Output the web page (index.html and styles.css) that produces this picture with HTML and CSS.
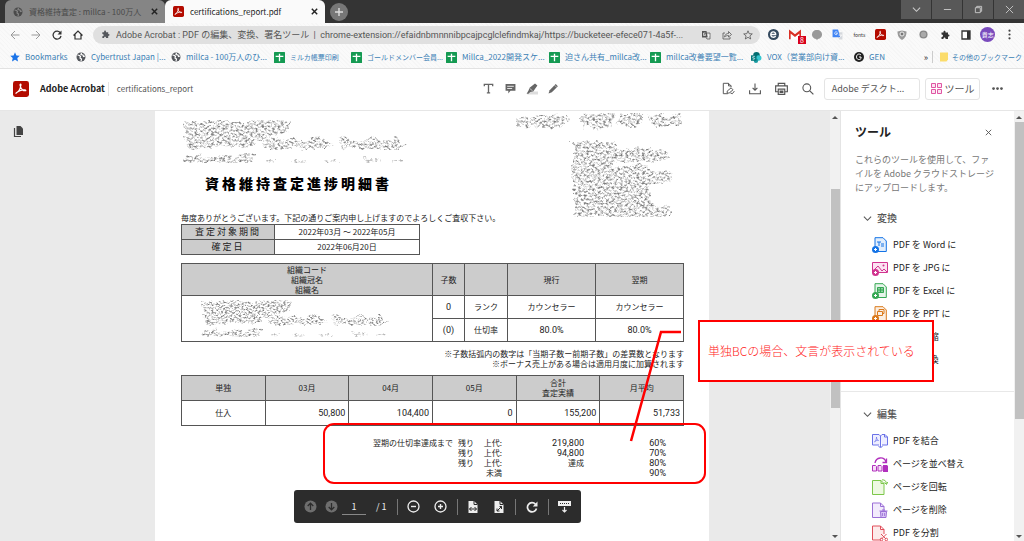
FILE: index.html
```html
<!DOCTYPE html>
<html lang="ja">
<head>
<meta charset="utf-8">
<title>certifications_report.pdf</title>
<link rel="stylesheet" href="styles.css">
</head>
<body>
<svg class="defs" aria-hidden="true">
  <symbol id="globe" viewBox="0 0 20 20"><circle cx="10" cy="10" r="9" fill="currentColor"/><path d="M3 6l4 1 2 2-1 3 3 2-1 4M11 2l-1 3 4 1 1 3 3-1" fill="none" stroke="var(--cut,#fff)" stroke-width="2.4"/></symbol>
  <symbol id="pdf" viewBox="0 0 20 20"><rect width="20" height="20" rx="3" fill="#b30b00"/><path d="M4 15c2-1 5-5 6-10 0-2-2-1-1 1 1 4 4 7 7 6 0-2-6-1-11 2-2 1-1 2-1 1z" fill="none" stroke="#fff" stroke-width="1.5"/></symbol>
  <symbol id="sheet" viewBox="0 0 20 20"><rect width="20" height="20" rx="1" fill="#149a52"/><path d="M10 3v14M3 8h14" stroke="#fff" stroke-width="2.4"/></symbol>
  <symbol id="puzzle" viewBox="0 0 20 20"><path d="M3 5h4c-1-5 5-5 4 0h5v4c4-1 4 5 0 4v5h-5c1-4-5-4-4 0H3v-4c4 0 4-5 0-5z" fill="currentColor"/></symbol>
  <symbol id="close" viewBox="0 0 10 10"><path d="M2 2l6 6M8 2l-6 6" stroke="currentColor" stroke-width="1.6"/></symbol>
  <symbol id="chev" viewBox="0 0 10 10"><path d="M1 3l4 4 4-4" fill="none" stroke="currentColor" stroke-width="1.2"/></symbol>
  <symbol id="trans" viewBox="0 0 20 20"><path d="M2 2h9l3 13H2z" fill="currentColor"/><path d="M12 6h6v12h-6l-2-3" fill="none" stroke="currentColor" stroke-width="1.5"/><path d="M9 6H5v5h4V9H7M12 10h5M16 10c-1 3-2 4-4 5" fill="none" stroke="#fff" stroke-width="1.3"/></symbol>
  <filter id="speckle" x="0" y="0" width="100%" height="100%">
    <feTurbulence type="fractalNoise" baseFrequency="0.36 0.5" numOctaves="3" seed="7" result="n"/>
    <feColorMatrix in="n" values="0 0 0 0 .2  0 0 0 0 .2  0 0 0 0 .2  3 0 0 0 -1.3" result="dots"/>
    <feTurbulence type="fractalNoise" baseFrequency="0.12" numOctaves="2" seed="3" result="w"/>
    <feDisplacementMap in="SourceGraphic" in2="w" scale="10" xChannelSelector="R" yChannelSelector="G" result="shape"/>
    <feComposite in="dots" in2="shape" operator="in"/>
  </filter>
  <symbol id="smudge" viewBox="0 0 232 48"><g filter="url(#speckle)">
    <path d="M2 2h72l36 2v10l-30 6-40 4H10z"/>
    <path d="M4 18h42l12 2 14-1 3 8-25 2-45 2zM80 22l10-3 12 5 8-4 14 3 16-3 12 8-6 3-60 0zM156 22l10-3 12 5 8-4 14 3 16-3 10 8-6 3-55 0z"/>
    <path d="M2 44l4-7h14l2 4 6-4h22l2 4 6-4h16v8H2z"/><path d="M84 42h10v3H84zM112 41h12v4h-12zM142 42h18v3h-18zM182 41h18v4h-18zM210 42h14v3h-14z" opacity=".6"/>
  </g></symbol>
  <symbol id="doc" viewBox="0 0 16 16"><path d="M3 .7h8l3.3 3.3v10.5H3z" fill="currentColor" fill-opacity=".12" stroke="currentColor" stroke-linejoin="round"/></symbol>
</svg>

<header class="browser">
  <div class="tabstrip">
    <div class="tab tab-idle"><svg class="i10 cutgray"><use href="#globe"/></svg><span class="tab-title">資格維持査定 : millca - 100万人</span><button class="bare" aria-label="閉じる"><svg class="i9"><use href="#close"/></svg></button></div>
    <div class="tab tab-active"><svg class="i11"><use href="#pdf"/></svg><span class="tab-title">certifications_report.pdf</span><button class="bare" aria-label="閉じる"><svg class="i9"><use href="#close"/></svg></button></div>
    <button class="newtab" aria-label="新しいタブ"><svg class="i10" viewBox="0 0 10 10"><path d="M5 1v8M1 5h8" stroke="#ddd" stroke-width="1.4"/></svg></button>
    <div class="winctl">
      <button aria-label="タブを検索"><svg class="i9"><use href="#chev"/></svg></button>
      <button aria-label="最小化"><svg class="i9" viewBox="0 0 10 10"><path d="M1 5h8" stroke="currentColor"/></svg></button>
      <button aria-label="元に戻す"><svg class="i9" viewBox="0 0 10 10"><path d="M1.500 3h5.500v5.500H1.500zM3 3V1.500h5.500V7H7" fill="none" stroke="currentColor"/></svg></button>
      <button aria-label="閉じる"><svg class="i9" viewBox="0 0 10 10"><path d="M1 1l8 8M9 1l-8 8" stroke="currentColor"/></svg></button>
    </div>
  </div>
  <div class="toolbar">
    <nav class="navbtns">
      <button class="bare faint" aria-label="戻る"><svg class="i10" viewBox="0 0 10 10"><path d="M9.500 5H1M5 1L1 5l4 4" fill="none" stroke="currentColor"/></svg></button>
      <button class="bare faint" aria-label="進む"><svg class="i10" viewBox="0 0 10 10"><path d="M.5 5H9M5 1l4 4-4 4" fill="none" stroke="currentColor"/></svg></button>
      <button class="bare" aria-label="再読み込み"><svg class="i10" viewBox="0 0 10 10"><path d="M8.500 3A4 4 0 1 0 9 6" fill="none" stroke="currentColor" stroke-width="1.3"/><path d="M9.500.5v4h-4z" fill="currentColor"/></svg></button>
      <button class="bare" aria-label="ホーム"><svg class="i10" viewBox="0 0 10 10"><path d="M.5 5.500L5 1l4.500 4.500M2 4.500V9h6V4.500" fill="none" stroke="currentColor" stroke-width="1.2"/></svg></button>
    </nav>
    <div class="omnibox">
      <svg class="i9 slate"><use href="#puzzle"/></svg>
      <span class="url">Adobe Acrobat : PDF の編集、変換、署名ツール  |  chrome-extension://efaidnbmnnnibpcajpcglclefindmkaj/https://bucketeer-efece071-4a5f-...</span>
      <button class="bare" aria-label="翻訳"><svg class="i10"><use href="#trans"/></svg></button>
      <button class="bare" aria-label="共有"><svg class="i10" viewBox="0 0 10 10"><path d="M3 3H1v6h7V7M2.500 7C3 4 5 3.500 6.500 3.500V1.500L9.500 4.500 6.500 7V5.500C5 5.500 3.500 6 2.500 7z" fill="none" stroke="currentColor" stroke-width=".8"/></svg></button>
      <button class="bare" aria-label="ブックマーク"><svg class="i10" viewBox="0 0 10 10"><path d="M5 .8l1.200 2.900 3.100.2-2.400 2 .8 3.100L5 7.300 2.300 9l.8-3.100-2.400-2 3.100-.2z" fill="none" stroke="currentColor" stroke-width=".8"/></svg></button>
    </div>
    <div class="exts">
      <button><svg class="i11" viewBox="0 0 20 20"><circle cx="10" cy="10" r="10" fill="#34495e"/><path d="M5 10h9c0-7-9-6-9 0 0 6 7 6 9 3" fill="none" stroke="#fff" stroke-width="2.400"/></svg></button>
      <button class="gmail"><svg class="i12" viewBox="0 0 20 20"><path d="M1 17V4l9 7 9-7v13" fill="#fff" stroke="#d93025" stroke-width="3.500"/></svg><span class="badge">8</span></button>
      <button><svg class="i10" viewBox="0 0 10 10"><path d="M5 0a4.500 4.500 0 0 1 1 9L5 10 4 9A4.500 4.500 0 0 1 5 0z" fill="#999"/></svg></button>
      <button><svg class="i11" viewBox="0 0 20 20"><path d="M8 6h11v13h-6z" fill="#d5d8dc"/><path d="M1 1h10l4 14H1z" fill="#4285f4"/><path d="M10 6C6 3 3 8 6 10c3 1 4-1 4-2H7M12 11h6M17 11c-1 3-2 4-4 5" fill="none" stroke="#fff" stroke-width="1.300"/></svg></button>
      <button class="fonts">fonts</button>
      <button><svg class="i11"><use href="#pdf"/></svg></button>
      <button><svg class="i10" viewBox="0 0 10 10"><path d="M.5 1.500L5 .5l4.500 1C9.500 6 8 8 5 10 2 8 .5 6 .5 1.500z" fill="#999"/><circle cx="5" cy="4" r="2" fill="#777" stroke="#eee"/></svg></button>
      <button><svg class="i9" viewBox="0 0 10 10"><circle cx="5" cy="5" r="4.500" fill="#888"/><circle cx="5" cy="5" r="3" fill="#aaa"/></svg></button>
      <button><svg class="i10 dark"><use href="#puzzle"/></svg></button>
      <button><svg class="i10" viewBox="0 0 10 10"><path d="M1 1h8v8H1z" fill="#fff" stroke="#333" stroke-width="1.300"/><path d="M6 1h3v8H6z" fill="#333"/></svg></button>
      <button class="avatar">貴志</button>
      <button><svg class="i11" viewBox="0 0 10 10" fill="#444"><circle cx="5" cy="1.500" r="1"/><circle cx="5" cy="5" r="1"/><circle cx="5" cy="8.500" r="1"/></svg></button>
    </div>
  </div>
  <nav class="bookmarks">
    <a href="#"><svg class="i10" viewBox="0 0 10 10"><path d="M5 .3l1.400 3.100 3.400.3-2.500 2.200.7 3.600L5 7.700 2 9.500l.7-3.600L.2 3.700l3.400-.3z" fill="#1a73e8"/></svg>Bookmarks</a>
    <a href="#"><svg class="i10 slate"><use href="#globe"/></svg>Cybertrust Japan |...</a>
    <a href="#"><svg class="i10 slate"><use href="#globe"/></svg>millca - 100万人のひ...</a>
    <a href="#" class="jp"><svg class="i11"><use href="#sheet"/></svg>ミルカ帳票印刷</a>
    <a href="#" class="jp"><svg class="i11"><use href="#sheet"/></svg>ゴールドメンバー会員...</a>
    <a href="#"><svg class="i11"><use href="#sheet"/></svg>Millca_2022開発スケ...</a>
    <a href="#"><svg class="i11"><use href="#sheet"/></svg>迫さん共有_millca改...</a>
    <a href="#"><svg class="i11"><use href="#sheet"/></svg>millca改善要望一覧...</a>
    <a href="#"><svg class="i11" viewBox="0 0 20 20"><circle cx="10" cy="6" r="6" fill="#036c70"/><circle cx="14" cy="11" r="5" fill="#37c6d0"/><circle cx="9" cy="16" r="4" fill="#1a9ba1"/><path d="M0 6h10v10H0z" fill="#03787c"/><path d="M7 8c-5-1-5 3-2 3s2 3-2 2" fill="none" stroke="#fff" stroke-width="1.300"/></svg>VOX（営業部向け資...</a>
    <a href="#"><svg class="i10" viewBox="0 0 20 20"><circle cx="10" cy="10" r="10" fill="#222"/><path d="M14 6c-4-4-9-1-9 4s6 7 9 3v-3h-4" fill="none" stroke="#fff" stroke-width="2"/></svg>GEN</a>
    <button class="bare more" aria-label="その他">»</button>
    <a href="#" class="jp other"><svg class="i10" viewBox="0 0 10 10"><path d="M1 .5h8v7L7.500 9.500H1z" fill="#fbdc6b"/></svg>その他のブックマーク</a>
  </nav>
</header>

<header class="acrobat">
  <div class="brand"><svg class="i16"><use href="#pdf"/></svg><strong>Adobe Acrobat</strong><span class="fname">certifications_report</span></div>
  <div class="annot">
    <button class="bare" aria-label="テキスト"><svg class="i11" viewBox="0 0 10 10"><path d="M1.200 3V1.200h7.600V3M5 1.200v7.600M3.500 8.900h3" fill="none" stroke="currentColor" stroke-width="1.200"/></svg></button>
    <button class="bare" aria-label="コメント"><svg class="i11" viewBox="0 0 20 20"><path d="M1 2h18v12h-9l-4 5v-5H1z" fill="currentColor"/><path d="M4 6h12M4 10h9" stroke="#fff" stroke-width="1.500"/></svg></button>
    <button class="bare" aria-label="ハイライト"><svg class="i12" viewBox="0 0 20 20"><path d="M6 14h14v5H2z" fill="#ddd"/><path d="M15 1l4 3-7 10-5 1-3 3H1l3-5 2-5z" fill="currentColor"/><path d="M6 9l5 4" stroke="#fff"/></svg></button>
    <button class="bare" aria-label="描画"><svg class="i11" viewBox="0 0 20 20"><path d="M1 19l2-6L14 2l4 4L7 17z" fill="currentColor"/><path d="M12 4l4 4" stroke="#fff"/></svg></button>
  </div>
  <div class="actions">
    <button class="bare" aria-label="署名"><svg class="i13" viewBox="0 0 20 20"><path d="M9 18H2V2h8l4 4v2M10 2v4h4M8 14l6-5 3 3-6 5H8zM13 17l3 1 3-4" fill="none" stroke="currentColor" stroke-width="1.500"/></svg></button>
    <button class="bare" aria-label="ダウンロード"><svg class="i12" viewBox="0 0 20 20"><path d="M10 1v11M6 8l4 4 4-4M1 12v6h18v-6" fill="none" stroke="currentColor" stroke-width="1.800"/></svg></button>
    <button class="bare" aria-label="印刷"><svg class="i13" viewBox="0 0 20 20"><path d="M5 6V2h10v4M5 15H1V6h18v9h-4M5 11h10v8H5zM7 14h6M7 16h6" fill="none" stroke="currentColor" stroke-width="1.800"/></svg></button>
    <button class="bare" aria-label="検索"><svg class="i12" viewBox="0 0 20 20"><circle cx="8" cy="8" r="6.500" fill="none" stroke="currentColor" stroke-width="1.800"/><path d="M13 13l6 6" stroke="currentColor" stroke-width="2"/></svg></button>
    <button class="boxed open">Adobe デスクト...</button>
    <button class="boxed tools"><svg class="i11" viewBox="0 0 11 11"><path d="M.5.5h4v4h-4zM6.500.5h4v4h-4zM.5 6.500h4v4h-4zM6.500 6.500h4v4h-4z" fill="#fbe3f1" stroke="#e055a3"/></svg>ツール</button>
    <button class="bare" aria-label="その他"><svg class="i11" viewBox="0 0 12 12" fill="currentColor"><circle cx="1.700" cy="6" r="1.500"/><circle cx="6" cy="6" r="1.500"/><circle cx="10.300" cy="6" r="1.500"/></svg></button>
  </div>
</header>

<main class="work">
  <aside class="rail"><button class="bare" aria-label="ページサムネイル"><svg class="i11" viewBox="0 0 11 11"><path d="M3.500 0h4L10 2.500V9H3.500z" fill="#444"/><path d="M1.500 2v8.500H8" fill="none" stroke="#444" stroke-width="1.200"/></svg></button></aside>

  <section class="viewer">
    <article class="page">
      <div class="dochead">
        <div>
          <svg class="smudge"><use href="#smudge"/></svg>
          <h1>資格維持査定進捗明細書</h1>
        </div>
        <svg class="stamp" viewBox="0 0 172 106"><g filter="url(#speckle)">
          <path d="M4 8l12-3 42-2v8l-10 6-42-1zM68 4l34-2-2 14-20 2-12-6zM108 3h24l-8 14-18-4zM134 5l36-2-2 10-24 4z"/>
          <path d="M60 30h40l6 8 42-2 10 8-10 6-40 2h-8v18l-40 4v-24z"/>
          <path d="M60 30h40l-4 22-36 4z" opacity=".6"/>
          <path d="M98 56l34-2 6 6 20 2 2 8-22 2v20l20 4v10l-50 4-22-6-24 4-2-30 8-16h34z"/>
          <path d="M60 88h22v16H60z"/><path d="M98 58h36v10H98zM88 72h46v16H88z"/>
        </g></svg>
      </div>
      <p class="intro">毎度ありがとうございます。下記の通りご案内申し上げますのでよろしくご査収下さい。</p>

      <table class="grid period">
        <tr><th>査定対象期間</th><td>2022年03月 ～ 2022年05月</td></tr>
        <tr><th>確定日</th><td>2022年06月20日</td></tr>
      </table>

      <table class="grid org">
        <colgroup><col class="c50"><col class="c6"><col class="c9"><col class="c17"><col></colgroup>
        <tr class="tall"><th>組織コード<br>組織冠名<br>組織名</th><th>子数</th><th></th><th>現行</th><th>翌期</th></tr>
        <tr><td rowspan="2"><svg class="smudge small"><use href="#smudge"/></svg></td><td class="dig">0</td><td>ランク</td><td>カウンセラー</td><td>カウンセラー</td></tr>
        <tr><td class="dig">(0)</td><td>仕切率</td><td class="dig">80.0%</td><td class="dig">80.0%</td></tr>
      </table>
      <p class="notes">※子数括弧内の数字は「当期子数ー前期子数」の差異数となります<br>※ボーナス売上がある場合は適用月度に加算されます</p>

      <table class="grid sales">
        <tr><th>単独</th><th>03月</th><th>04月</th><th>05月</th><th>合計<br>査定実績</th><th>月平均</th></tr>
        <tr><td>仕入</td><td class="num">50,800</td><td class="num">104,400</td><td class="num">0</td><td class="num">155,200</td><td class="num">51,733</td></tr>
      </table>

      <table class="remain">
        <colgroup><col class="r1"><col class="r2"><col class="r3"><col class="r4"><col class="r4"><col></colgroup>
        <tr><td>翌期の仕切率達成まで</td><td>残り</td><td>上代:</td><td class="fig">219,800</td><td class="fig">60%</td><td></td></tr>
        <tr><td></td><td>残り</td><td>上代:</td><td class="fig">94,800</td><td class="fig">70%</td><td></td></tr>
        <tr><td></td><td>残り</td><td>上代:</td><td>達成</td><td class="fig">80%</td><td></td></tr>
        <tr><td></td><td></td><td>未満</td><td></td><td class="fig">90%</td><td></td></tr>
      </table>

      <div class="mark"></div>
      <svg class="leader" viewBox="0 0 60 120"><path d="M53 9H33L3 118" fill="none" stroke="#f00" stroke-width="2.500"/></svg>
      <div class="callout">単独BCの場合、文言が表示されている</div>

      <div class="pager">
        <button class="bare" aria-label="前のページ"><svg class="i13" viewBox="0 0 13 13"><circle cx="6.500" cy="6.500" r="6" fill="#6e6e6e"/><path d="M6.500 10V3.500M3.700 6l2.800-2.800L9.300 6" fill="none" stroke="#2c2c2c" stroke-width="1.300"/></svg></button>
        <button class="bare next" aria-label="次のページ"><svg class="i13" viewBox="0 0 13 13"><circle cx="6.500" cy="6.500" r="6" fill="#6e6e6e"/><path d="M6.500 3v6.500M3.700 7l2.800 2.800L9.300 7" fill="none" stroke="#2c2c2c" stroke-width="1.300"/></svg></button>
        <input type="text" value="1" aria-label="ページ番号"><span class="total">/ 1</span>
        <i></i>
        <button class="bare" aria-label="縮小"><svg class="i13" viewBox="0 0 13 13"><circle cx="6.500" cy="6.500" r="5.500" fill="none" stroke="#eee" stroke-width="1.300"/><path d="M4 6.500h5" stroke="#eee" stroke-width="1.400"/></svg></button>
        <button class="bare second" aria-label="拡大"><svg class="i13" viewBox="0 0 13 13"><circle cx="6.500" cy="6.500" r="5.500" fill="none" stroke="#eee" stroke-width="1.300"/><path d="M4 6.500h5M6.500 4v5" stroke="#eee" stroke-width="1.400"/></svg></button>
        <i></i>
        <button class="bare" aria-label="幅に合わせる"><svg class="i12" viewBox="0 0 12 12"><path d="M1.500 0H7l3.500 3.500V12h-9z" fill="#eee"/><path d="M7 0v3.500h3.500M2.500 8h7M4.500 6l-2 2 2 2M7.500 6l2 2-2 2" fill="none" stroke="#2c2c2c"/></svg></button>
        <button class="bare second" aria-label="全体表示"><svg class="i12" viewBox="0 0 12 12"><path d="M1.500 0H7l3.500 3.500V12h-9z" fill="#eee"/><path d="M7 0v3.500h3.500M4 10l4.500-4.500M4 7.500V10h2.500M6.500 5.500h2V8" fill="none" stroke="#2c2c2c"/></svg></button>
        <i></i>
        <button class="bare" aria-label="回転"><svg class="i12" viewBox="0 0 12 12"><path d="M9.500 3.200A4.600 4.600 0 1 0 10.500 7.500" fill="none" stroke="#eee" stroke-width="1.700"/><path d="M11.500.5v5H6.800z" fill="#eee"/></svg></button>
        <i></i>
        <button class="bare" aria-label="ツールバーを固定"><svg class="i13" viewBox="0 0 13 13"><path d="M0 1h13v5H0z" fill="#eee"/><path d="M2 3.500h9" stroke="#2c2c2c" stroke-dasharray="1 1"/><path d="M6.500 7v5M4.500 10l2 2 2-2" fill="none" stroke="#eee" stroke-width="1.200"/></svg></button>
      </div>
    </article>
  </section>
  <div class="scroll main-scroll"><b class="up"></b><div class="thumb"></div><b class="down"></b></div>

  <aside class="panel">
    <div class="panel-head"><h2>ツール</h2><button class="bare" aria-label="閉じる"><svg class="i9" viewBox="0 0 10 10"><path d="M2 2l6 6M8 2l-6 6" stroke="#555"/></svg></button></div>
    <p>これらのツールを使用して、ファ<br>イルを Adobe クラウドストレージ<br>にアップロードします。</p>
    <section>
      <h3><svg class="i9"><use href="#chev"/></svg>変換</h3>
      <ul>
        <li class="blue"><svg class="i16" viewBox="0 0 16 16"><use href="#doc"/><path d="M5 5h4M7 5v4M9 7h3M9 9h3" stroke="currentColor"/><circle cx="3.500" cy="12.500" r="3.500" fill="currentColor"/><path d="M2 12.500h3M3.500 11v3" stroke="#fff"/></svg>PDF を Word に</li>
        <li class="pink"><svg class="i16" viewBox="0 0 16 16"><path d="M.5 2.500h15v10H.5z" fill="#fbe3f1" stroke="currentColor"/><path d="M2 10l4-4 4 5 2-2 3 3" fill="none" stroke="currentColor"/><circle cx="11.500" cy="5.500" r="1" fill="currentColor"/><circle cx="3.500" cy="12.500" r="3.500" fill="currentColor"/><path d="M2 12.500h3M3.500 11v3" stroke="#fff"/></svg>PDF を JPG に</li>
        <li class="green"><svg class="i16" viewBox="0 0 16 16"><use href="#doc"/><path d="M5.500 4.500h6v5h-6zM5.500 7h6M8.500 4.500v5" fill="#35a853" fill-opacity=".5" stroke="currentColor"/><circle cx="3.500" cy="12.500" r="3.500" fill="currentColor"/><path d="M2 12.500h3M3.500 11v3" stroke="#fff"/></svg>PDF を Excel に</li>
        <li class="orange"><svg class="i16" viewBox="0 0 16 16"><use href="#doc"/><path d="M5.500 5.500h5v4h-5zM7 5.500v-2h5v4h-1.500" fill="none" stroke="currentColor"/><circle cx="3.500" cy="12.500" r="3.500" fill="currentColor"/><path d="M2 12.500h3M3.500 11v3" stroke="#fff"/></svg>PDF を PPT に</li>
        <li class="pink"><svg class="i16" viewBox="0 0 16 16"><use href="#doc"/></svg>PDF を圧縮</li>
        <li class="blue"><svg class="i16" viewBox="0 0 16 16"><use href="#doc"/></svg>PDF に変換</li>
      </ul>
    </section>
    <section class="edit">
      <h3><svg class="i9"><use href="#chev"/></svg>編集</h3>
      <ul>
        <li class="indigo"><svg class="i16" viewBox="0 0 16 16"><path d="M7 12H.5V1.500H7l1.500 1.500V14M8.500 3L10 1.500h3l2.500 2.500V12H10M12.500 1.500V4h3M6.500 13l2 2 2-2" fill="#eef" stroke="currentColor"/><path d="M2.500 9c2-2 2-4 2-5 0 2 1 3 2 3.500-2-.5-3 .5-4 1.500z" fill="none" stroke="currentColor" stroke-width=".7"/></svg>PDF を結合</li>
        <li class="purple"><svg class="i16" viewBox="0 0 16 16"><path d="M.5 9.500h3l1 1V15h-4zM6 9.500h3l1 1V15H6z" fill="#f6def6" stroke="currentColor"/><path d="M11 9h4l1 1v6h-5z" fill="currentColor"/><path d="M3 7c1-6 9-7 11-1M14.500 2.500V6.500h-4" fill="none" stroke="currentColor" stroke-width="1.300"/></svg>ページを並べ替え</li>
        <li class="lime"><svg class="i16" viewBox="0 0 16 16"><path d="M.5 1.500H9l3 3v11H.5z" fill="#eef9e2" stroke="currentColor"/><path d="M9 1.500v3h3M10 .8c3 0 4 1 4.500 4M12.500 3.500l2 2 1.300-2.500" fill="none" stroke="currentColor"/></svg>ページを回転</li>
        <li class="violet"><svg class="i16" viewBox="0 0 16 16"><path d="M.5 1h8L12 4.500v11H.5z" fill="#f2ebfc" stroke="currentColor"/><path d="M8.500 1v3.500H12M7.500 9h8M10 8h3" fill="none" stroke="currentColor"/><path d="M8.500 9.500h6l-.5 6H9z" fill="#d9c6f5" stroke="currentColor"/><path d="M10.500 11v3M12.500 11v3" stroke="currentColor" stroke-width=".8"/></svg>ページを削除</li>
        <li class="red"><svg class="i16" viewBox="0 0 16 16"><path d="M9 15H.5V1h8L12 4.500V9M8.500 1v3.500H12" fill="#fdeaea" stroke="currentColor"/><path d="M9 9l5 5M14.500 9l-5 5" stroke="currentColor"/><circle cx="9.500" cy="14.500" r="1.300" fill="none" stroke="currentColor"/><circle cx="14.300" cy="14.500" r="1.300" fill="none" stroke="currentColor"/></svg>PDF を分割</li>
      </ul>
    </section>
  </aside>
  <div class="scroll panel-scroll"><b class="up"></b><div class="thumb"></div><b class="down"></b></div>
</main>
</body>
</html>
```

FILE: styles.css
```css
* { box-sizing: border-box; }
body {
  margin: 0;
  height: 100vh;
  display: flex;
  flex-direction: column;
  overflow: hidden;
  font-family: "Noto Sans CJK JP", sans-serif;
  font-size: 8px;
  color: #333;
  background: #fff;
}
button, input { font: inherit; color: inherit; }
button { border: 0; padding: 0; background: none; display: flex; align-items: center; justify-content: center; }
svg { display: block; flex: none; }
h1, h2, h3, p, ul { margin: 0; padding: 0; }
.defs { position: absolute; width: 0; height: 0; }
.i9 { width: 9px; height: 9px; }
.i10 { width: 10px; height: 10px; }
.i11 { width: 11px; height: 11px; }
.i12 { width: 12px; height: 12px; }
.i13 { width: 13px; height: 13px; }
.i16 { width: 16px; height: 16px; }
.slate { color: #54575c; }
.dark { color: #333; }
.cutgray { --cut: #858585; }

/* browser frame */
.browser { flex: none; border-bottom: 1px solid #e2e2e2; }
.tabstrip { height: 23px; display: flex; align-items: center; background: #343434; padding-left: 5px; }
.tab { width: 160px; height: 23px; display: flex; align-items: center; gap: 6px; padding: 0 6px 0 8px; border-radius: 6px 6px 0 0; }
.tab-title { flex: 1; overflow: hidden; white-space: nowrap; line-height: 14px; }
.tab-idle { background: #858585; color: #4a4a4a; }
.tab-idle button { color: #222; }
.tab-active { background: #fafafa; color: #222; }
.newtab { width: 18px; height: 18px; margin-left: 5px; border-radius: 9px; background: #777; }
.winctl { margin-left: auto; align-self: flex-start; display: flex; gap: 1px; color: #ccc; }
.winctl button { width: 30px; height: 19px; background: #585858; }
.toolbar, .bookmarks { background: repeating-linear-gradient(45deg, #fafafa 0 2px, #f6f6f6 2px 3px); }
.toolbar { height: 23px; display: flex; align-items: center; padding-right: 4px; }
.navbtns { width: 93px; display: flex; gap: 11px; padding-left: 10px; color: #333; }
.faint { color: #999; }
.omnibox { flex: 1; min-width: 0; height: 18px; display: flex; align-items: center; gap: 11px; padding: 0 7px 0 8px; border-radius: 9px; background: #e0e0e0; color: #555; }
.url { flex: 1; min-width: 0; overflow: hidden; white-space: pre; margin: 0 -6px 0 -5px; font-family: Roboto, "Noto Sans CJK JP", sans-serif; font-size: 9px; line-height: 16px; }
.exts { width: 260px; display: grid; grid-template-columns: repeat(12, 1fr); align-items: center; padding-left: 3px; }
.gmail { position: relative; }
.badge { position: absolute; right: 0; bottom: -3px; width: 8px; height: 8px; background: #d8001b; color: #fff; font-size: 7px; line-height: 8px; text-align: center; }
.fonts { font-size: 5px; }
.avatar { width: 15px; height: 15px; margin: auto; border-radius: 8px; background: #7a4bbd; color: #fff; font-size: 6px; }
.bookmarks { height: 22px; display: grid; grid-template-columns: 66px 95px 103px 77px 95px 103px 101px 101px 103px 1fr 12px 92px; align-items: center; padding: 0 0 0 10px; }
.bookmarks a { display: flex; align-items: center; gap: 5px; color: #3b7fb5; text-decoration: none; white-space: nowrap; line-height: 12px; }
.bookmarks .jp { font-size: 7px; }
.bookmarks .other { gap: 3px; padding-left: 6px; border-left: 1px solid #ccc; }
.more { font-size: 9px; }

/* viewer header */
.acrobat { flex: none; height: 42px; display: grid; grid-template-columns: 1.06fr 76px 1fr; align-items: center; border-bottom: 1px solid #e6e6e6; padding: 0 21px 2px 13px; color: #555; }
.brand { display: flex; align-items: center; gap: 11px; font-size: 9px; color: #222; }
.fname { border-left: 1px solid #e4e4e4; padding-left: 8px; margin-left: -8px; color: #555; line-height: 14px; font-size: 8px; }
.annot { display: flex; justify-content: space-between; color: #666; }
.actions { display: flex; align-items: center; justify-content: flex-end; gap: 14px; }
.boxed { height: 22px; border: 1px solid #e4e4e4; border-radius: 3px; background: #fff; white-space: nowrap; font-size: 10px; }
.open { width: 96px; padding-right: 8px; margin-left: -4px; font-size: 9px; }
.tools { width: 55px; gap: 3px; margin-left: -9px; margin-right: -2px; }

/* work area */
.work { flex: 1; min-height: 0; display: flex; background: #eaeaea; }
.rail { flex: none; width: 34px; padding: 15px 0 0 13px; }
.viewer { flex: 1; min-width: 0; display: flex; justify-content: center; }
.page { position: relative; flex: none; width: 554px; padding: 0 25px 0 26px; background: #fff; color: #222; font-size: 8px; line-height: 10px; }
.dochead { height: 102px; display: flex; justify-content: space-between; }
.smudge { width: 232px; height: 48px; margin: 7px 0; }
.small { width: 194px; height: 44px; margin: 0 0 0 18px; }
h1 { font-size: 14px; line-height: 20px; letter-spacing: 3px; padding-left: 24px; font-weight: 900; color: #000; }
.stamp { width: 172px; height: 106px; }
.intro { white-space: nowrap; }
.grid { width: 100%; table-layout: fixed; border-collapse: collapse; }
.grid th, .grid td { border: 1px solid #555; padding: 0; font-weight: 400; text-align: center; }
.grid th { background: #ccc; }
.period { width: 239px; margin-top: 1px; }
.period tr { height: 15px; }
.period th { width: 93px; font-size: 9px; letter-spacing: 2px; }
.period td { line-height: 14px; }
.org { margin-top: 8px; }
.org tr { height: 23px; }
.org .tall { height: 32px; }
.c50 { width: 251px; }
.c6 { width: 32px; }
.c9 { width: 43px; }
.c17 { width: 88px; }
.notes { padding-top: 7px; text-align: right; }
.sales { margin-top: 6px; }
.sales tr { height: 25px; }
.dig, .grid td.num, .remain .fig { font-family: Roboto, sans-serif; font-size: 9px; }
.grid td.num { text-align: right; padding-right: 3px; }
.remain { width: 100%; margin-top: 12px; table-layout: fixed; border-collapse: collapse; }
.remain td { padding: 0; text-align: right; white-space: nowrap; line-height: 10px; }
.r1 { width: 272px; }
.r2 { width: 21px; }
.r3 { width: 28px; }
.r4 { width: 82px; }

/* annotations over the page */
.mark { position: absolute; left: 168px; top: 312px; width: 383px; height: 61px; border: 2px solid #f00; border-radius: 11px; }
.leader { position: absolute; left: 473px; top: 212px; width: 60px; height: 120px; }
.callout { position: absolute; z-index: 2; left: 543px; top: 209px; padding: 20px 9px 20px 8px; border: 2px solid #f00; background: #fff; color: #f22; font-size: 12px; font-weight: 300; line-height: 18px; width: 236px; white-space: nowrap; }
.pager { position: absolute; left: 139px; top: 379px; width: 287px; height: 33px; padding: 0 10px; display: flex; align-items: center; gap: 10px; border-radius: 3px; background: #2c2c2c; color: #eee; font-size: 9px; }
.pager .next { margin-left: -2px; }
.pager .second { margin-left: 4px; }
.pager input { width: 24px; height: 17px; margin-left: -6px; border: 0; border-bottom: 1px solid #888; padding: 0; background: none; text-align: center; }
.total { flex: none; white-space: nowrap; }
.pager i { width: 1px; height: 16px; background: #777; }

/* scrollbars */
.scroll { flex: none; width: 10px; display: flex; flex-direction: column; align-items: center; background: #f1f1f1; }
.scroll b { width: 0; border: 3px solid transparent; }
.scroll .up { border-bottom-color: #555; margin-top: 2px; }
.scroll .down { border-top-color: #555; margin-top: auto; }
.thumb { width: 9px; background: #c1c1c1; }
.main-scroll .thumb { margin-top: 70px; height: 51%; }
.panel-scroll .thumb { margin-top: 3px; height: 69%; }

/* tools panel */
.panel { flex: none; width: 174px; overflow: hidden; background: #fff; font-size: 9px; border-left: 1px solid #e4e4e4; }
.panel-head { display: flex; justify-content: space-between; align-items: center; padding: 11px 21px 0 14px; }
h2 { font-size: 12px; line-height: 20px; color: #222; }
.panel p { padding: 11px 0 0 14px; line-height: 14px; color: #777; white-space: nowrap; }
.panel section { padding: 15px 0 0 22px; }
.panel .edit { margin-top: 20px; padding-top: 14px; border-top: 1px solid #e8e8e8; }
h3 { display: flex; align-items: center; gap: 5px; font-size: 10px; line-height: 16px; color: #555; font-weight: 500; }
.panel ul { list-style: none; padding: 7px 0 0 9px; }
.panel li { display: flex; align-items: center; gap: 5px; height: 23px; white-space: nowrap; color: #222; }
.blue svg { color: #1473e6; }
.pink svg { color: #d1338f; }
.green svg { color: #35a853; }
.orange svg { color: #db7a1c; }
.indigo svg { color: #6a72e8; }
.purple svg { color: #b130bd; }
.lime svg { color: #7cc74a; }
.violet svg { color: #9b6fd6; }
.red svg { color: #e04e5a; }
```
